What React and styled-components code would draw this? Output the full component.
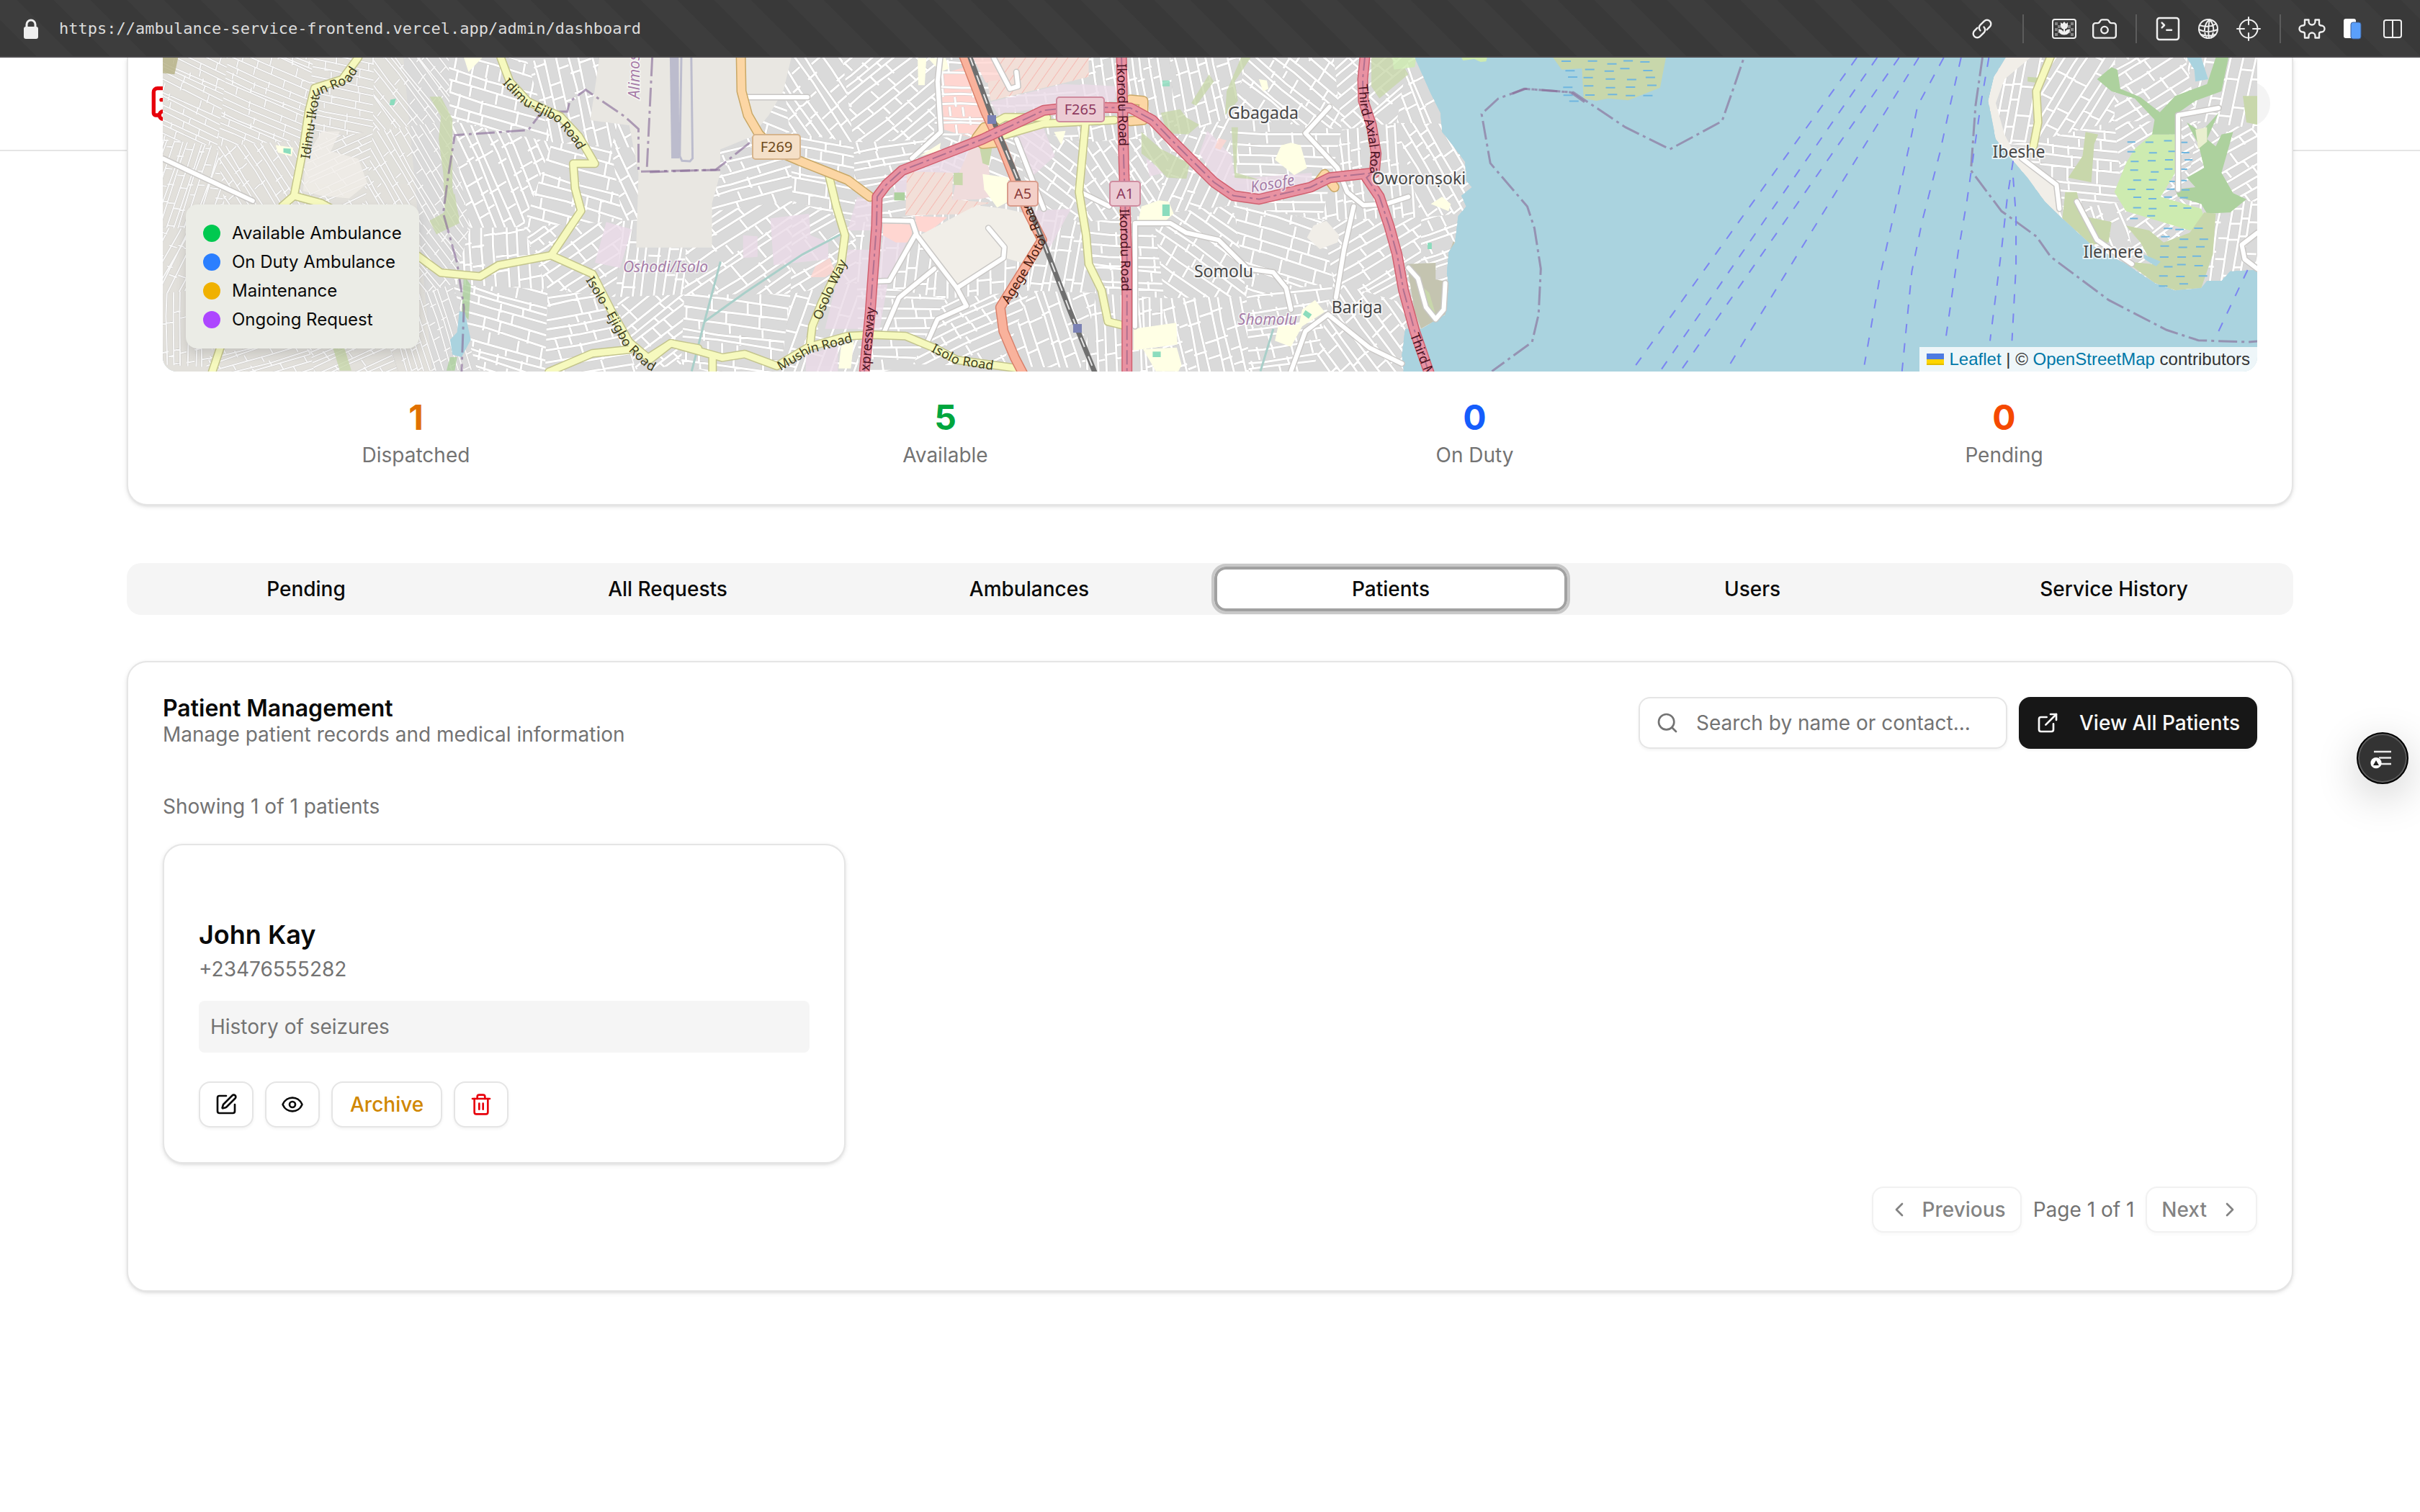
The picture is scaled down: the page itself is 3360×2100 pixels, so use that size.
import React from "react";
import styled, { createGlobalStyle, css } from "styled-components";
import {
  Ambulance,
  Camera,
  ChevronLeft,
  ChevronRight,
  Columns2,
  ExternalLink,
  Eye,
  Search,
  SquarePen,
  SquareTerminal,
  Trash2,
} from "lucide-react";

const GlobalStyle = createGlobalStyle`
  *, *::before, *::after { box-sizing: border-box; }
  body {
    margin: 0;
    background: #ffffff;
    color: #0a0a0a;
    font-family: Inter, "Liberation Sans", sans-serif;
    font-size: 28px;
    line-height: 40px;
  }
  button, input { font: inherit; color: inherit; }
  h2, h3, p, ul, dl, dd { margin: 0; padding: 0; }
`;

/* ---------- Browser bar ---------- */

const BrowserBar = styled.div`
  display: flex;
  align-items: center;
  justify-content: space-between;
  height: 80px;
  padding: 2px 20px 0 32px;
  border-bottom: 2px solid #4c4a4d;
  background: repeating-linear-gradient(45deg, #393939 0 36px, #3d3d3d 36px 72px);
  color: #efefef;
`;

const Address = styled.div`
  display: flex;
  align-items: center;
  gap: 28px;
  color: #dcdcdc;
  font-family: "DejaVu Sans Mono", "Liberation Mono", monospace;
  font-size: 22px;
  line-height: 32px;
`;

const BarTools = styled.div`
  display: flex;
  align-items: center;
  gap: 20px;
`;

const BarButton = styled.button`
  display: flex;
  align-items: center;
  justify-content: center;
  width: 36px;
  height: 40px;
  padding: 0;
  border: 0;
  background: none;
  color: #efefef;

  svg { flex: none; }
`;

const BarDivider = styled.span`
  width: 2px;
  height: 40px;
  margin: 0 ${(p) => p.$space || 0}px;
  background: #5c5c5c;
`;

/* ---------- Page frame ---------- */

const Header = styled.header`
  border-bottom: 2px solid #e5e5e5;
`;

const HeaderInner = styled.div`
  display: flex;
  align-items: center;
  justify-content: space-between;
  max-width: 3008px;
  height: 128px;
  margin: 0 auto;
  padding: 0 32px;
  background: linear-gradient(to right, #ffffff, #f7f7f7 50px, #f7f7f7 calc(100% - 50px), #ffffff);
  color: #e7000b;
`;

const Avatar = styled.button`
  width: 64px;
  height: 64px;
  border: 0;
  border-radius: 50%;
  background: #f4f4f4;
`;

const Main = styled.main`
  max-width: 3072px;
  margin: 0 auto;
  padding: 0 32px 32px;
`;

const Card = styled.section`
  padding: 48px;
  border: 2px solid #e5e5e5;
  border-radius: 28px;
  background: #ffffff;
  box-shadow: 0 2px 6px rgba(0, 0, 0, 0.1), 0 2px 4px -2px rgba(0, 0, 0, 0.1);
`;

const MapCard = styled(Card)`
  padding-top: 0;
  border-top: 0;
  border-top-left-radius: 0;
  border-top-right-radius: 0;
`;

/* ---------- Map ---------- */

const MapFrame = styled.div`
  position: relative;
  z-index: 1;
  height: 436px;
  margin-top: -130px;
  overflow: hidden;
  border-radius: 0 0 20px 20px;
  background: #aad3df;
`;

const MapDrawing = styled.svg`
  display: block;
  width: 100%;
  height: 100%;
  font-family: "Noto Sans", sans-serif;
`;

const Legend = styled.ul`
  position: absolute;
  left: 32px;
  bottom: 32px;
  display: grid;
  gap: 8px;
  padding: 24px;
  border-radius: 16px;
  background: #ebece6;
  box-shadow: 0 8px 16px rgba(0, 0, 0, 0.12);
  font-size: 24px;
  line-height: 32px;
  list-style: none;
`;

const LegendItem = styled.li`
  display: flex;
  align-items: center;
  gap: 16px;

  &::before {
    content: "";
    width: 24px;
    height: 24px;
    border-radius: 50%;
    background: ${(p) => p.$color};
  }
`;

const Attribution = styled.div`
  position: absolute;
  right: 0;
  bottom: 0;
  padding: 0 10px;
  background: rgba(255, 255, 255, 0.8);
  color: #333333;
  font-family: "Liberation Sans", sans-serif;
  font-size: 24px;
  line-height: 34px;

  a { color: #0078a8; text-decoration: none; }
  svg { margin-right: 8px; }
`;

/* ---------- Stats ---------- */

const Stats = styled.dl`
  display: grid;
  grid-template-columns: repeat(4, 1fr);
  gap: 32px;
  margin-top: 32px;
`;

const Stat = styled.div`
  display: flex;
  flex-direction: column-reverse;
  text-align: center;

  dt { color: #737373; }
  dd {
    color: ${(p) => p.$color};
    font-size: 48px;
    font-weight: 700;
    line-height: 64px;
  }
`;

/* ---------- Tabs ---------- */

const TabList = styled.div`
  display: grid;
  grid-template-columns: repeat(6, 1fr);
  gap: 4px;
  height: 72px;
  margin: 80px 0 64px;
  padding: 1px 0;
  border-radius: 20px;
  background: #f5f5f5;
`;

const Tab = styled.button`
  padding: 0;
  border: 4px solid transparent;
  border-radius: 20px;
  background: transparent;
  font-weight: 500;

  ${(p) =>
    p.$active &&
    css`
      border-color: #c8c8c8;
      background: #ffffff;
      box-shadow: inset 0 0 0 4px #a1a1a1;
    `}
`;

/* ---------- Patients ---------- */

const SectionHead = styled.div`
  display: flex;
  justify-content: space-between;
  margin-bottom: 60px;
`;

const SectionTitle = styled.h2`
  font-size: 32px;
  font-weight: 600;
  line-height: 32px;
`;

const Muted = styled.p`
  color: #737373;
`;

const HeadActions = styled.div`
  display: flex;
  gap: 16px;
`;

const SearchField = styled.label`
  display: flex;
  align-items: center;
  gap: 24px;
  width: 512px;
  height: 72px;
  padding: 0 22px;
  border: 2px solid #e5e5e5;
  border-radius: 16px;
  box-shadow: 0 2px 4px rgba(0, 0, 0, 0.05);
  color: #737373;

  svg { flex: none; }
  input {
    flex: 1;
    min-width: 0;
    padding: 0;
    border: 0;
    outline: 0;
    background: none;
  }
  input::placeholder { color: #737373; opacity: 1; }
`;

const PrimaryButton = styled.button`
  display: flex;
  align-items: center;
  gap: 28px;
  height: 72px;
  padding: 0 24px;
  border: 0;
  border-radius: 16px;
  background: #171717;
  box-shadow: 0 2px 4px rgba(0, 0, 0, 0.05);
  color: #fafafa;
  font-weight: 500;
`;

const OutlineButton = styled.button`
  display: flex;
  align-items: center;
  gap: 16px;
  height: 64px;
  padding: 0 ${(p) => (p.$textOnly ? 24 : 20)}px;
  border: 2px solid #e5e5e5;
  border-radius: 16px;
  background: #ffffff;
  box-shadow: 0 2px 4px rgba(0, 0, 0, 0.05);
  color: ${(p) => p.$color || "#0a0a0a"};
  font-weight: 500;

  &:disabled { opacity: 0.5; }
`;

const PatientGrid = styled.div`
  display: grid;
  grid-template-columns: repeat(3, 1fr);
  gap: 32px;
  margin: 32px 0;
`;

const PatientCard = styled(Card).attrs({ as: "article" })`
  padding-top: 96px;
`;

const PatientName = styled.h3`
  font-size: 36px;
  font-weight: 600;
  line-height: 56px;
`;

const Note = styled.p`
  margin: 24px 0 40px;
  padding: 16px;
  border-radius: 8px;
  background: #f5f5f5;
  color: #737373;
`;

const ButtonRow = styled.div`
  display: flex;
  gap: 16px;
`;

const Pagination = styled.nav`
  display: flex;
  align-items: center;
  justify-content: flex-end;
  gap: 16px;
  padding-bottom: 32px;
`;

const FloatingButton = styled.button`
  position: fixed;
  top: 1017px;
  right: 16px;
  display: flex;
  align-items: center;
  justify-content: center;
  width: 72px;
  height: 72px;
  padding: 0;
  border: 2px solid #000000;
  border-radius: 50%;
  background: #333333;
  box-shadow: inset 0 0 0 2px #5c5c5c, 0 16px 60px rgba(0, 0, 0, 0.2);
`;

/* ---------- Map data ---------- */

/* Every map sheet has its own grid; a sheet turns grid points into map units. */
const sheet = (ox, oy, sx, sy) => (text) =>
  "M" +
  text
    .split(" ")
    .map((pair) => {
      const [x, y] = pair.split(",").map(Number);
      return `${(ox + x / sx).toFixed(1)} ${(oy + y / sy).toFixed(1)}`;
    })
    .join("L");

const W = sheet(0, 0, 1.568, 2.904);
const C = sheet(900, 60, 2.24, 3);
const L = sheet(1500, 60, 2.24, 3);
const E = sheet(2100, 60, 1.2444, 3);

const westLand =
  "M226 80" +
  L("1040,60 1090,210 1120,290 1125,370 1160,430 1197,495 1197,570 1218,600 1185,635 1200,680 1175,720 1165,830 1145,870 1140,960 1145,1010 1135,1130 1060,1190 1010,1190 1000,1300 1005,1370").replace("M", "L") +
  "L226 516Z";
const eastLand =
  E("852,60 832,140 822,240 835,400 865,490 890,560 920,660 950,730 1000,840 1060,920 1110,1000 1145,1030 1190,1020 1200,990 1225,990 1240,950 1290,945 1290,60") + "Z";

const areas = [
  ["#ebdbe8", C("1065,245 1290,170 1450,180 1450,240 1250,262 1090,300")],
  ["#ebdbe8", C("1140,390 1225,340 1265,470 1190,560")],
  ["#ebdbe8", C("1170,700 1315,690 1250,850 1225,830")],
  ["#ebdbe8", C("610,860 690,860 745,1000 720,1190 550,1190")],
  ["#ebdbe8", C("380,730 500,710 505,800 560,830 560,900 390,925")],
  ["#ebdbe8", C("295,800 340,805 340,890 295,895")],
  ["#ebdbe8", C("650,640 700,660 700,780 620,780")],
  ["#ebdbe8", C("730,800 810,810 750,980 715,980")],
  ["#ebdbe8", C("780,540 1000,440 980,530 800,620 760,640")],
  ["#ebdbe8", C("490,1300 590,1260 590,1367 490,1367")],
  ["#ffd6d1", C("1010,60 1075,60 1110,150 1050,165")],
  ["#ffd6d1", C("505,975 520,930 565,895 580,950 550,975")],
  ["#ebdbe8", L("370,460 395,365 415,390 470,470 480,560 540,570 540,620 440,600")],
  ["#ebdbe8", L("480,565 720,540 720,590 560,630 470,610")],
  ["#ebdbe8", L("0,170 110,180 110,230 0,230")],
  ["#ebdbe8", L("205,480 260,540 215,555")],
  ["#ffd6d1", L("430,395 455,405 435,445 418,435")],
  ["#c8d7ab", L("250,290 310,275 330,310 370,340 335,380 270,375")],
  ["#c8d7ab", L("190,370 250,440 340,500 330,565 270,560 220,490 190,460")],
  ["#c8d7ab", L("500,60 530,60 480,160 490,240 450,300 455,200")],
  ["#c8d7ab", L("400,130 415,160 360,260 345,250")],
  ["#c8d7ab", L("470,350 490,350 485,540 560,570 480,560")],
  ["#c8d7ab", L("905,60 990,60 1020,130 930,230 905,180")],
  ["#cdebb0", L("970,60 1045,60 1040,100 975,110")],
  ["#8bdcbd", L("255,155 278,155 278,180 255,180")],
  ["#c8d7ab", W("935,390 960,390 985,480 985,600 985,760 1000,880 970,920 965,700 955,560 960,470")],
  ["#c8d7ab", W("965,860 990,780 1000,900 950,945 935,890")],
  ["#add19e", W("1010,1110 1025,1150 1020,1290 1005,1260")],
  ["#c8d7ab", W("725,1405 750,1405 765,1495 740,1495")],
  ["#add19e", W("980,1440 995,1440 990,1495 972,1495")],
  ["#f1eee8", W("700,530 740,530 720,610 780,640 800,740 760,800 700,790 660,770 665,640")],
  ["#ebdbe8", W("1320,895 1375,925 1350,1080 1295,1060")],
  ["#b5b083", W("354,232 388,232 380,300 354,295")],
];

const retailArea = ["#ffd6d1", C("910,130 985,100 1050,330 1020,400 920,360")];

const openAreas = [
  ["#e9e7e2", W("1305,232 1420,232 1568,232 1568,700 1550,820 1550,998 1385,998 1390,700 1370,505 1285,485")],
  ["#e9e7e2", C("0,60 445,60 420,200 375,300 320,390 210,450 195,600 195,850 0,850")],
  ["#f2dfd8", C("805,535 948,540 945,650 1065,665 1015,680 985,712 800,718")],
  ["#f0dcdc", C("1000,440 1030,430 1060,520 1065,640 1030,650 945,655 960,560")],
  ["#f2dfd8", C("1085,60 1370,60 1370,140 1065,240 1055,160 1110,150")],
  ["#ffd6d1", C("730,750 820,755 820,830 770,830 730,800")],
  ["#ffd6d1", C("830,720 930,725 870,790 835,780")],
  ["#f1eee8", C("845,800 1020,675 1110,690 1180,710 1215,820 1200,930 1110,895 960,1015")],
  ["#ffffe5", C("1040,545 1120,560 1120,660 1085,685 1045,610")],
  ["#ffffe5", C("1262,370 1298,365 1285,425")],
  ["#ffffe5", C("838,62 865,62 860,175 840,175")],
  ["#ffffe5", C("870,62 925,62 935,105 910,120")],
  ["#ffffe5", C("845,470 910,415 905,450")],
  ["#ffffe5", C("600,1260 640,1240 630,1355 592,1355")],
  ["#c8d7ab", C("1030,430 1070,430 1060,510 1040,500")],
  ["#c8d7ab", C("950,540 978,540 978,592 950,590")],
  ["#add19e", C("765,622 798,622 798,655 765,655")],
  ["#ffffe5", L("655,415 685,425 705,520 665,550 605,485 625,425")],
  ["#ffffe5", L("190,680 245,655 275,660 290,710 265,740 180,740")],
  ["#8bdcbd", L("255,672 278,672 278,720 255,720")],
  ["#ffffe5", L("555,150 580,155 585,190 568,200")],
  ["#f1eee8", L("765,740 805,800 800,830 745,858 705,810 725,760")],
  ["#ffffe5", L("165,1190 298,1165 302,1255 165,1280")],
  ["#ffffe5", L("195,1275 300,1268 315,1340 305,1367 235,1367")],
  ["#8bdcbd", L("225,1285 250,1285 250,1308 225,1308")],
  ["#ffffe5", L("730,1070 760,1120 690,1180 655,1265 605,1240 615,1180 680,1170 690,1110")],
  ["#8bdcbd", L("700,1112 720,1130 710,1148 692,1130")],
  ["#ffffe5", L("1125,640 1152,670 1145,700 1090,670")],
  ["#8bdcbd", L("1080,832 1093,832 1093,858 1080,858")],
  ["#ffffe5", W("1010,232 1050,232 1020,290")],
  ["#ffffe5", W("600,585 638,595 635,630 605,615")],
  ["#8bdcbd", W("617,598 633,600 633,622 617,615")],
  ["#8bdcbd", W("850,402 862,398 858,424 848,424")],
  ["#c4c4b0", L("1015,920 1105,915 1105,985 1150,995 1135,1130 1060,1190 1040,1120")],
  ["#c4c4b0", L("1160,825 1218,885 1205,900 1142,890")],
  ["#c8d7ab", L("1060,1010 1085,1040 1105,1130 1090,1140 1065,1060")],
  ["#aad3df", W("1000,1255 1012,1260 1025,1370 1005,1440 985,1430 980,1370 995,1340")],
];

const eastAreas = [
  ["#f1eee8", E("852,60 895,60 850,150 835,250 850,380 870,470 940,590 945,720 920,660 865,490 835,400 822,240 832,140")],
  ["#c8d7ab", E("955,620 975,620 985,720 1035,745 1030,830 1000,840 950,730")],
  ["#c8d7ab", E("990,370 1012,380 1005,420 1000,580 960,560 985,470")],
  ["#c8d7ab", E("890,140 915,145 905,165 890,160")],
  ["#cdebb0", E("1105,380 1145,380 1155,500 1120,640 1190,690 1200,760 1170,780 1060,700 1040,620 1060,500 1075,440")],
  ["#add19e", E("1215,60 1237,60 1225,200 1180,240 1150,290 1148,380 1105,380 1110,310 1145,220 1200,170")],
  ["#add19e", E("1110,320 1075,230 1035,200 1010,150 1035,100 1045,110 1050,190 1085,225 1125,300")],
  ["#add19e", E("1165,330 1185,420 1195,520 1165,560 1180,600 1145,610 1150,640 1190,670 1200,710 1240,705 1268,650 1245,625 1225,540 1245,370 1225,380 1215,430 1200,400 1220,290 1190,370")],
  ["#e9efcf", E("1180,360 1200,350 1200,410 1185,440")],
  ["#c8d7ab", E("1060,760 1100,780 1125,830 1170,790 1195,705 1215,710 1210,880 1190,1020 1145,1030 1110,1000 1060,910 1105,920 1085,830")],
  ["#c8d7ab", E("1262,220 1287,220 1287,340 1268,330")],
  ["#aad3df", E("1165,60 1190,60 1202,150 1180,160 1178,110")],
  ["#aad3df", E("1090,880 1120,910 1112,930 1092,900")],
];

const whiteRoads = [
  C("730,738 820,740 835,800 960,1020 990,1095 900,1150 870,1240"),
  C("830,800 750,990 710,992"),
  C("960,1020 1105,895 1108,850 1058,770"),
  C("890,940 780,1060 735,1200"),
  C("908,60 900,160 910,370 820,480"),
  C("1145,400 1230,690"),
  C("305,225 495,225"),
  C("1075,62 1125,190 1150,180 1145,120"),
  W("355,640 470,740 550,810"),
  L("170,1180 170,750 280,750 330,790 430,820 520,940 600,955 640,1020 655,1110"),
  L("775,265 700,375 800,520 830,620 880,675 950,670 1020,640"),
  L("850,680 820,860 795,1060"),
  L("655,1367 700,1200 770,1130 900,1270 1000,1335"),
  L("1020,935 1050,980 1075,1100 1105,1150 1130,1110 1135,1000"),
  L("0,620 90,680"),
  E("1287,790 1260,840 1265,900 1287,940"),
  E("975,660 1010,820 1070,920"),
  E("1150,610 1150,300 1220,270"),
  E("880,480 940,590 945,690"),
];

const yellowRoads = [
  W("780,232 745,320 685,355 672,450 660,600 640,790 615,830"),
  W("640,790 700,820 780,900 908,1030 960,1100 1045,1115 1085,1070 1200,1030"),
  W("1090,232 1110,330 1150,410 1220,470 1260,550 1295,660 1248,660 1252,760 1265,850 1200,1030 1290,1105 1330,1250 1370,1380 1415,1450 1460,1385 1520,1405"),
  W("1195,1500 1290,1425 1370,1410"),
  W("480,1400 462,1500"),
  C("0,1310 70,1250 230,1310 300,1295 400,1345 500,1265 620,1220 700,1215 800,1220 890,1270 960,1320 1150,1355"),
  C("200,1310 200,1370"),
  C("560,540 585,680 612,800 600,920 540,1080 510,1180 503,1260"),
  C("1360,330 1340,620 1362,800 1370,920 1410,1030 1430,1160 1475,1175"),
  C("1090,390 1230,335 1450,320"),
  C("1080,330 1110,308 1240,310"),
  E("930,55 905,200 908,330 900,430"),
];

const orangeRoads = [
  C("288,55 290,200 310,300 345,380 400,450 470,490 620,570 690,640"),
  C("1500,235 1540,240 1540,320 1500,325"),
  C("1020,395 1045,350 1080,350 1080,415 1040,420 1020,395"),
  L("740,580 760,545 790,600"),
];

const redRoads = [
  C("672,1370 690,1130 710,760 712,640 740,590 790,530 1040,400 1230,280 1330,265 1500,270 1568,320 1640,420 1760,580 1820,635 1900,650 2060,600 2120,560 2220,545 2260,540"),
  L("885,55 878,150 880,240 905,340 920,460 915,530 890,560 930,640 960,760 985,880 1005,1030 1040,1200 1085,1375"),
  L("128,55 135,500 145,900 145,1375"),
];

const agegeRoad = C("982,55 1050,290 1100,430 1180,700 1225,820 1160,960 1095,1100 1105,1200 1140,1310 1165,1375");
const railway = C("1000,55 1070,310 1230,830 1310,1110 1390,1375");

const boundaries = [
  L("1568,245 1525,205 1385,190 1300,230 1248,295 1275,500 1390,680 1412,770 1432,940 1425,1130 1405,1245 1280,1367"),
  E("0,210 20,190 105,205 195,350 272,442 362,325 380,200 400,60"),
  E("812,60 800,260 792,530 845,700 905,805 930,890 1030,1070 1130,1195 1185,1238 1270,1245 1287,1242"),
  W("1420,232 1408,690"),
  W("1568,685 1390,692 1390,520 1360,470 1275,362 1240,410 1235,450 1180,450 1150,525 990,545 975,720 965,860 995,1060 1010,1240 1005,1500"),
  C("5,537 210,527 325,405"),
];

const ferries = [
  E("595,60 212,1345"),
  E("630,60 255,1367"),
  E("668,60 290,1367"),
  E("702,60 370,1360"),
  E("745,60 700,260 688,400 662,680 635,970 608,1340"),
  E("775,60 757,250 738,460 708,740 690,950 673,1367"),
  E("823,60 810,240 798,440 785,660 770,870 748,1240"),
  E("865,490 855,640 845,860 825,1240"),
  E("865,560 870,720 870,930 863,1240"),
  E("1270,945 1213,1235"),
];

const streams = [
  C("225,910 175,1160 135,1367"),
  C("175,1160 300,1040 480,880 600,795"),
  L("600,1190 560,1367"),
];

/* Repeatable noise, so that the street blocks are the same on every load. */
const makeNoise = (seed) => () => {
  seed = (seed * 16807) % 2147483647;
  return seed / 2147483647;
};

/* Street blocks: the land is cut into uneven cells, each with its own street direction. */
const buildBlocks = (x0, x1, cols, rows, seed) => {
  const rnd = makeNoise(seed);
  const cw = (x1 - x0) / cols;
  const ch = 460 / rows;
  const node = [];
  for (let r = 0; r <= rows; r++) {
    node.push([]);
    for (let c = 0; c <= cols; c++) {
      node[r].push([x0 + c * cw + (rnd() - 0.5) * cw * 0.5, 68 + r * ch + (rnd() - 0.5) * ch * 0.4]);
    }
  }
  const blocks = [];
  for (let r = 0; r < rows; r++) {
    for (let c = 0; c < cols; c++) {
      const corners = [node[r][c], node[r][c + 1], node[r + 1][c + 1], node[r + 1][c]];
      const cx = (corners[0][0] + corners[2][0]) / 2;
      const cy = (corners[0][1] + corners[2][1]) / 2;
      const angle = (rnd() - 0.5) * 1.4 + (rnd() > 0.5 ? Math.PI / 2 : 0);
      const cos = Math.cos(angle);
      const sin = Math.sin(angle);
      const at = (u, v) => `${(cx + u * cos - v * sin).toFixed(1)} ${(cy + u * sin + v * cos).toFixed(1)}`;
      const dense = cx < 640;
      let d = "";
      let v = -110;
      while (v < 110) {
        const step = (dense ? 7 : 10) + rnd() * (dense ? 5 : 9);
        const bend = (rnd() - 0.5) * 10;
        d += `M${at(-110, v)}L${at(-20, v + bend)}L${at(110, v)}`;
        let u = -110 + rnd() * 30;
        while (u < 110) {
          d += `M${at(u, v)}L${at(u + 2, v + step)}`;
          u += 18 + rnd() * 38;
        }
        v += step;
      }
      blocks.push({ id: `b${seed}-${r}-${c}`, outline: "M" + corners.map((p) => p.join(" ")).join("L") + "Z", d, dense });
    }
  }
  return blocks;
};

const westBlocks = buildBlocks(200, 2060, 17, 4, 71);
const eastBlocks = buildBlocks(2740, 3160, 4, 4, 23);

const marshMarks = (() => {
  const rnd = makeNoise(9);
  let d = "";
  for (let i = 0; i < 26; i++) d += `M${2168 + (i % 5) * 27 + rnd() * 12} ${84 + Math.floor(i / 5) * 11 + rnd() * 5}h13`;
  for (let i = 0; i < 34; i++) d += `M${2952 + (i % 4) * 24 + rnd() * 12} ${195 + Math.floor(i / 4) * 13 + rnd() * 5}h11`;
  for (let i = 0; i < 20; i++) d += `M${2996 + (i % 3) * 24 + rnd() * 10} ${315 + Math.floor(i / 3) * 13 + rnd() * 5}h12`;
  return d;
})();

const places = [
  ["Gbagada", 1754, 165],
  ["Oworonṣoki", 1970, 256],
  ["Somolu", 1699, 385],
  ["Bariga", 1884, 435],
  ["Ibeshe", 2803, 219],
  ["Ilemere", 2934, 358],
];

const districts = [
  ["Oshodi/Isolo", 924, 378, 0],
  ["Kosofe", 1768, 262, -10],
  ["Shomolu", 1760, 451, 0],
  ["Alimosho", 888, 94, -90],
];

const shields = [
  ["F269", 1045, 187, 66, "#f5e0c8", "#d6b48c", "#6e4a1c"],
  ["F265", 1467, 135, 66, "#ecccd4", "#cf8c9f", "#8e3a5f"],
  ["A5", 1399, 252, 42, "#f4d0c8", "#d99c8c", "#8a3a3a"],
  ["A1", 1541, 252, 42, "#ecccd4", "#cf8c9f", "#8e3a5f"],
];

const roadNames = [
  ["Idimu-Ikotun Road", W("665,640 680,450 688,370 755,320 780,250"), "#3f3f1c"],
  ["Idimu-Ejibo Road", W("1100,325 1145,410 1215,475 1255,560 1280,640"), "#3f3f1c"],
  ["Isolo - Ejigbo Road", W("1283,1120 1325,1250 1365,1385 1412,1470 1440,1500"), "#3f3f1c"],
  ["Osolo Way", C("525,1150 555,1050 605,910"), "#3f3f1c"],
  ["Mushin Road", C("405,1350 500,1275 640,1225"), "#3f3f1c"],
  ["Isolo Road", C("885,1268 960,1320 1100,1350"), "#3f3f1c"],
  ["Agege Motor Road", C("1110,1080 1165,960 1222,825 1180,690 1140,560"), "#4a1c10"],
  ["Third Axial Road", L("878,172 885,270 905,360 916,460 914,560"), "#4a1020"],
  ["Third Mainland", L("1038,1210 1085,1375 1120,1500"), "#4a1020"],
  ["Expressway", C("672,1395 690,1130 700,1000"), "#4a1020"],
  ["Ikorodu Road", L("128,85 134,420"), "#4a1020"],
  ["Ikorodu Road", L("136,690 142,1050"), "#4a1020"],
];

const Strokes = ({ paths, casing, color, width }) => (
  <g fill="none" strokeLinejoin="round" strokeLinecap="round">
    {paths.map((d) => (
      <path key={"c" + d} d={d} stroke={casing} strokeWidth={width + 3} />
    ))}
    {paths.map((d) => (
      <path key={d} d={d} stroke={color} strokeWidth={width} />
    ))}
  </g>
);

const Areas = ({ items }) => items.map(([color, d]) => <path key={d} d={d + "Z"} fill={color} />);

const Streets = ({ blocks }) =>
  blocks.map((b) => (
    <g key={b.id} clipPath={`url(#${b.id})`} fill="none">
      <clipPath id={b.id}>
        <path d={b.outline} />
      </clipPath>
      <path d={b.d} stroke="#cbc9c7" strokeWidth={b.dense ? 3 : 4} />
      <path d={b.d} stroke={b.dense ? "#f8f8f8" : "#ffffff"} strokeWidth={b.dense ? 2 : 3} />
    </g>
  ));

const CityMap = () => (
  <MapDrawing viewBox="226 80 2908 436" preserveAspectRatio="xMidYMid slice" role="img" aria-label="Map of Lagos">
    <defs>
      <clipPath id="west"><path d={westLand} /></clipPath>
      <clipPath id="east"><path d={eastLand} /></clipPath>
      <pattern id="hatch" width="12" height="12" patternUnits="userSpaceOnUse" patternTransform="rotate(35)">
        <path d="M0 0V12" stroke="#f6b9b2" strokeWidth="2" />
      </pattern>
    </defs>
    <g clipPath="url(#west)">
      <path d={westLand} fill="#dadada" />
      <path d="M226 80H560L600 516H226Z" fill="#e2e0db" />
      <Areas items={[retailArea]} />
      <Streets blocks={westBlocks} />
      <g opacity="0.8">
        <Areas items={areas} />
      </g>
      <Areas items={openAreas} />
      <path d={openAreas[2][1] + "Z"} fill="url(#hatch)" />
      <path d={openAreas[4][1] + "Z"} fill="url(#hatch)" />
      <path d={C("67,60 95,60 97,480 72,480") + "Z"} fill="#bcbccd" />
      <path d={C("103,60 98,470 105,490 130,492 138,480 134,60")} fill="none" stroke="#bcbccd" strokeWidth="3" />
      <g fill="none" stroke="#a9cfc9" strokeWidth="3">
        {streams.map((d) => <path key={d} d={d} />)}
      </g>
    </g>
    <g clipPath="url(#east)">
      <path d={eastLand} fill="#dadada" />
      <Streets blocks={eastBlocks} />
      <Areas items={eastAreas} />
    </g>
    <path d={E("70,60 85,110 120,105 123,230 145,240 165,230 200,238 255,185 265,60") + "Z"} fill="#c8d7ab" />
    <path d={L("1185,60 1190,72 1225,66 1245,78 1262,76 1265,60") + "Z"} fill="#cdebb0" />
    <path d={marshMarks} stroke="#6fb6e0" strokeWidth="2" fill="none" />
    <g fill="none" stroke="#8a6f9a" strokeOpacity="0.65" strokeWidth="3" strokeDasharray="26 6 4 6">
      {boundaries.map((d) => <path key={d} d={d} />)}
    </g>
    <g fill="none" stroke="#7b84f2" strokeWidth="2" strokeDasharray="13 14">
      {ferries.map((d) => <path key={d} d={d} />)}
    </g>
    <Strokes paths={whiteRoads} casing="#c9c7c5" color="#ffffff" width={6} />
    <Strokes paths={yellowRoads} casing="#c3c48c" color="#f6f9be" width={9} />
    <Strokes paths={orangeRoads} casing="#c9a867" color="#fcd6a4" width={11} />
    <Strokes paths={[agegeRoad]} casing="#d9806a" color="#f9b29c" width={11} />
    <path d={railway} fill="none" stroke="#6f6f6f" strokeWidth="7" />
    <path d={railway} fill="none" stroke="#e6e6e6" strokeWidth="2" strokeDasharray="14 14" />
    <Strokes paths={redRoads} casing="#d0606f" color="#e892a2" width={12} />
    <g fill="none" stroke="#b0708f" strokeWidth="2" strokeDasharray="20 5 4 5">
      {redRoads.map((d) => <path key={d} d={d} />)}
    </g>
    <path d="M1371 160h12v12h-12zM1490 450h12v12h-12z" fill="#7a81b4" />
    {roadNames.map(([name, d, color], i) => (
      <g key={name + i}>
        <path id={`road${i}`} d={d} fill="none" />
        <text dy="6" fontSize="18" fill={color}>
          <textPath href={`#road${i}`}>{name}</textPath>
        </text>
      </g>
    ))}
    {shields.map(([name, x, y, w, fill, line, ink]) => (
      <g key={name}>
        <rect x={x} y={y} width={w} height="34" rx="4" fill={fill} stroke={line} strokeWidth="2" />
        <text x={x + w / 2} y={y + 24} textAnchor="middle" fontSize="20" fill={ink}>{name}</text>
      </g>
    ))}
    <g textAnchor="middle" fill="#a67da8" fontStyle="italic" fontSize="21" stroke="#ffffff" strokeOpacity="0.6" strokeWidth="3" paintOrder="stroke">
      {districts.map(([name, x, y, turn]) => (
        <text key={name} x={x} y={y} transform={`rotate(${turn} ${x} ${y})`}>{name}</text>
      ))}
    </g>
    <g textAnchor="middle" fill="#474747" fontSize="23" stroke="#ffffff" strokeOpacity="0.7" strokeWidth="4" paintOrder="stroke">
      {places.map(([name, x, y]) => (
        <text key={name} x={x} y={y}>{name}</text>
      ))}
    </g>
  </MapDrawing>
);

/* ---------- Bar icons ---------- */

const line = { fill: "none", stroke: "currentColor", strokeWidth: 2, strokeLinecap: "round", strokeLinejoin: "round" };

const LockIcon = () => (
  <svg width="22" height="28" viewBox="0 0 22 28">
    <rect x="1" y="11" width="20" height="17" rx="3" fill="#efefef" />
    <path d="M5 12V8a6 6 0 0 1 12 0v4" fill="none" stroke="#efefef" strokeWidth="3" />
  </svg>
);

const ChainIcon = () => (
  <svg width="32" height="32" viewBox="0 0 32 32" {...line} strokeWidth="2.4">
    <path d="M13.5 18.5a5.5 5.5 0 0 1 0-7.8l5.4-5.4a5.5 5.5 0 0 1 7.8 7.8L22.5 17.3" />
    <path d="M18.5 13.5a5.5 5.5 0 0 1 0 7.8l-5.4 5.4a5.5 5.5 0 0 1-7.8-7.8L9.5 14.7" />
  </svg>
);

const PictureIcon = () => (
  <svg width="34" height="28" viewBox="0 0 34 28">
    <rect x="1" y="1" width="32" height="26" rx="3" {...line} />
    <path d="M4 5h4v4H4zM8 9h4v4H8zM4 13h4v4H4zM8 17h4v3H8zM4 20h4v4H4zM26 5h4v4h-4zM22 9h4v4h-4zM26 13h4v4h-4zM22 17h4v3h-4zM26 20h4v4h-4z" fill="#858585" />
    <path d="M12 5l2.5 2L17 4l2.5 3L22 5v5a5 5 0 0 1-4 4.5V18c1.500-2.5 4-3.5 7-3.5 0 4.500-3 8-8 8s-8-3.500-8-8c3 0 5.500 1 7 3.500v-3.500A5 5 0 0 1 12 10z" fill="#efefef" />
  </svg>
);

const GlobeIcon = () => (
  <svg width="28" height="28" viewBox="0 0 28 28" {...line}>
    <circle cx="14" cy="14" r="13" />
    <path d="M16 1C8 7 7 19 12 27M16 1c6 7 7 17 2 25.5M16 1c-2 8-2 18-1 26M2 9c8 3 17 2 23-2M1 15c8 4 18 4 26 0M4 22c6 2 14 2 20 0" />
  </svg>
);

const TargetIcon = () => (
  <svg width="34" height="34" viewBox="0 0 34 34" {...line}>
    <circle cx="17" cy="17" r="12.5" />
    <path d="M17 1v10M17 23v10M1 17h10M23 17h10" />
  </svg>
);

const PuzzleIcon = () => (
  <svg width="38" height="28" viewBox="0 0 38 28" {...line} strokeWidth="2.4">
    <path d="M9 1.5h5.5V4a4.5 4.5 0 0 0 9 0V1.5H29V7c0 2 1 2.5 3 2.5a4.5 4.5 0 0 1 0 9c-2 0-3 .5-3 2.5v5.5h-5.5V24a4.500 4.500 0 0 0-9 0v2.5H9V21c0-2-1-2.500-3-2.500a4.500 4.500 0 0 1 0-9c2 0 3-.5 3-2.500z" />
  </svg>
);

const DevicesIcon = () => (
  <svg width="26" height="30" viewBox="0 0 26 30">
    <rect x="1" y="1" width="17" height="27" rx="3" fill="#ffffff" />
    <rect x="11" y="6" width="14" height="23" rx="3" fill="#5a9ffa" stroke="#3c5f94" strokeWidth="1" />
  </svg>
);

const ListIcon = () => (
  <svg width="34" height="34" viewBox="0 0 34 34">
    <path d="M5 8h24M12 16.5h17M15 25h14" stroke="#e8e8e8" strokeWidth="2.6" />
    <circle cx="5.5" cy="23.7" r="9.5" fill="#333333" />
    <circle cx="8" cy="23.7" r="7.6" fill="#ffffff" />
    <path d="M8 20l4 7H4z" fill="#222222" />
  </svg>
);

const FlagIcon = () => (
  <svg width="24" height="16" viewBox="0 0 12 8" aria-hidden="true">
    <path fill="#4C7BE1" d="M0 0h12v4H0z" />
    <path fill="#FFD500" d="M0 4h12v3H0z" />
    <path fill="#E0BC00" d="M0 7h12v1H0z" />
  </svg>
);

/* ---------- Page ---------- */

const legend = [
  ["Available Ambulance", "#00c950"],
  ["On Duty Ambulance", "#2b7fff"],
  ["Maintenance", "#f0b100"],
  ["Ongoing Request", "#ad46ff"],
];

const stats = [
  ["Dispatched", 1, "#e17100"],
  ["Available", 5, "#00a63e"],
  ["On Duty", 0, "#155dfc"],
  ["Pending", 0, "#f54900"],
];

const tabs = ["Pending", "All Requests", "Ambulances", "Patients", "Users", "Service History"];

export default function App() {
  return (
    <>
      <GlobalStyle />
      <BrowserBar>
        <Address>
          <LockIcon />
          <span>https://ambulance-service-frontend.vercel.app/admin/dashboard</span>
        </Address>
        <BarTools>
          <BarButton aria-label="Copy link"><ChainIcon /></BarButton>
          <BarDivider $space={18} />
          <BarButton aria-label="Image"><PictureIcon /></BarButton>
          <BarButton aria-label="Screenshot"><Camera size={38} strokeWidth={1.5} /></BarButton>
          <BarDivider $space={5} />
          <BarButton aria-label="Console"><SquareTerminal size={40} strokeWidth={1.5} /></BarButton>
          <BarButton aria-label="Network"><GlobeIcon /></BarButton>
          <BarButton aria-label="Inspect"><TargetIcon /></BarButton>
          <BarDivider $space={5} />
          <BarButton aria-label="Extensions"><PuzzleIcon /></BarButton>
          <BarButton aria-label="Devices"><DevicesIcon /></BarButton>
          <BarButton aria-label="Split view"><Columns2 size={32} strokeWidth={1.5} /></BarButton>
        </BarTools>
      </BrowserBar>

      <Header>
        <HeaderInner>
          <Ambulance size={64} />
          <Avatar aria-label="Account" />
        </HeaderInner>
      </Header>

      <Main>
        <MapCard>
          <MapFrame>
            <CityMap />
            <Legend>
              {legend.map(([label, color]) => (
                <LegendItem key={label} $color={color}>{label}</LegendItem>
              ))}
            </Legend>
            <Attribution>
              <a href="#leaflet"><FlagIcon />Leaflet</a> | © <a href="#osm">OpenStreetMap</a> contributors
            </Attribution>
          </MapFrame>
          <Stats>
            {stats.map(([label, value, color]) => (
              <Stat key={label} $color={color}>
                <dt>{label}</dt>
                <dd>{value}</dd>
              </Stat>
            ))}
          </Stats>
        </MapCard>

        <TabList role="tablist">
          {tabs.map((name) => (
            <Tab key={name} role="tab" aria-selected={name === "Patients"} $active={name === "Patients"}>
              {name}
            </Tab>
          ))}
        </TabList>

        <Card>
          <SectionHead>
            <div>
              <SectionTitle>Patient Management</SectionTitle>
              <Muted>Manage patient records and medical information</Muted>
            </div>
            <HeadActions>
              <SearchField>
                <Search size={32} />
                <input type="text" aria-label="Search patients" placeholder="Search by name or contact..." />
              </SearchField>
              <PrimaryButton>
                <ExternalLink size={32} />
                View All Patients
              </PrimaryButton>
            </HeadActions>
          </SectionHead>

          <Muted>Showing 1 of 1 patients</Muted>

          <PatientGrid>
            <PatientCard>
              <PatientName>John Kay</PatientName>
              <Muted>+23476555282</Muted>
              <Note>History of seizures</Note>
              <ButtonRow>
                <OutlineButton aria-label="Edit"><SquarePen size={32} /></OutlineButton>
                <OutlineButton aria-label="View"><Eye size={32} /></OutlineButton>
                <OutlineButton $color="#d08700" $textOnly>Archive</OutlineButton>
                <OutlineButton aria-label="Delete" $color="#e7000b"><Trash2 size={32} /></OutlineButton>
              </ButtonRow>
            </PatientCard>
          </PatientGrid>

          <Pagination aria-label="Pages">
            <OutlineButton disabled>
              <ChevronLeft size={32} />
              Previous
            </OutlineButton>
            <Muted>Page 1 of 1</Muted>
            <OutlineButton disabled>
              Next
              <ChevronRight size={32} />
            </OutlineButton>
          </Pagination>
        </Card>
      </Main>

      <FloatingButton aria-label="Open panel"><ListIcon /></FloatingButton>
    </>
  );
}
